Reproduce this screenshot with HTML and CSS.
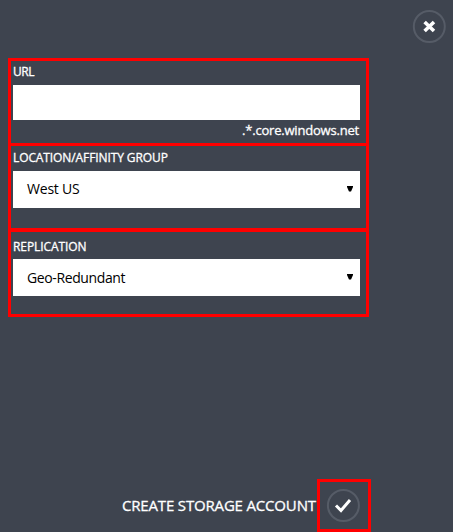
FILE: index.html
```
<!DOCTYPE html>
<html lang="en">
<head>
<meta charset="utf-8">
<title>Create storage account</title>
<link rel="stylesheet" href="styles.css">
</head>
<body>
<main class="panel">
  <header class="top">
    <svg class="round" viewBox="0 0 34 34" role="img" aria-label="Close"><circle cx="17.3" cy="17.5" r="15.5"/><path class="cross" d="M12.6 13l9.4 9m0-9l-9.4 9"/></svg>
  </header>
  <form class="fields">
    <section class="field field-url">
      <label class="label url-label">URL</label>
      <div class="input"></div>
      <div class="suffix"><span>.*.core.windows.net</span></div>
    </section>
    <section class="field field-location">
      <label class="label location-label">LOCATION/AFFINITY GROUP</label>
      <div class="select"><span class="west">West US</span><svg class="arrow" viewBox="0 0 6 6"><path d="M0 0h6v1L4 5.5H2L0 1z"/></svg></div>
    </section>
    <section class="field field-replication">
      <label class="label replication-label">REPLICATION</label>
      <div class="select"><span class="geo">Geo-Redundant</span><svg class="arrow" viewBox="0 0 6 6"><path d="M0 0h6v1L4 5.5H2L0 1z"/></svg></div>
    </section>
  </form>
  <footer class="bottom">
    <span class="action">CREATE STORAGE ACCOUNT</span>
    <div class="confirm">
      <svg class="round" viewBox="0 0 34 34" role="img" aria-label="Create"><circle cx="17.4" cy="17.5" r="15.5"/><path class="check" d="M10 17.5l5 5L24 12"/></svg>
    </div>
  </footer>
</main>
</body>
</html>
```

FILE: styles.css
```
* { box-sizing: border-box; }
body { margin: 0; background: #3e444f; color: #fff; font-family: "Open Sans", "Noto Sans", sans-serif; }
.panel { width: 453px; height: 532px; display: flex; flex-direction: column; overflow: hidden; }
.top { height: 58px; flex: none; display: flex; justify-content: flex-end; padding: 9px 7px 0 0; }
.round { display: block; width: 34px; height: 34px; fill: none; }
.round circle { stroke: #565c67; stroke-width: 2; }
.cross { stroke: #fff; stroke-width: 3.6; }
.check { stroke: #fff; stroke-width: 3; }
.fields { width: 361px; height: 259px; flex: none; margin-left: 8px; border: 3px solid #f00; }
.field { padding: 0 6px 0 2px; border-bottom: 0 solid #f00; }
.field-url { height: 85px; border-bottom-width: 3px; }
.field-location { height: 86px; border-bottom-width: 4px; }
.label, .suffix, .action { -webkit-text-stroke: .3px #fff; }
.label { display: block; font-size: 12px; line-height: 20px; white-space: nowrap; }
.url-label { height: 24px; padding-top: 1px; letter-spacing: -.4px; }
.location-label { height: 25px; padding-top: 2px; letter-spacing: -.1px; }
.replication-label { height: 27px; padding-top: 5px; letter-spacing: -.08px; }
.input { height: 35px; background: #fff; }
.suffix { display: flex; justify-content: flex-end; padding-right: 1px; font-size: 13px; line-height: 20px; letter-spacing: -.2px; }
.select { height: 37px; background: #fff; color: #000; display: flex; align-items: center; justify-content: space-between; padding: 0 7px 2px 14px; font-size: 14px; letter-spacing: -.38px; }
.west { letter-spacing: -.2px; }
.geo { padding-top: 2px; }
.arrow { width: 6px; height: 6px; fill: #000; }
.bottom { display: flex; align-items: center; margin-top: 162px; height: 53px; padding-left: 122px; }
.action { width: 195px; padding-bottom: 2px; font-size: 15px; white-space: nowrap; letter-spacing: -.17px; }
.confirm { width: 54px; height: 53px; border: 3px solid #f00; padding: 6px 0 0 6px; }
```
